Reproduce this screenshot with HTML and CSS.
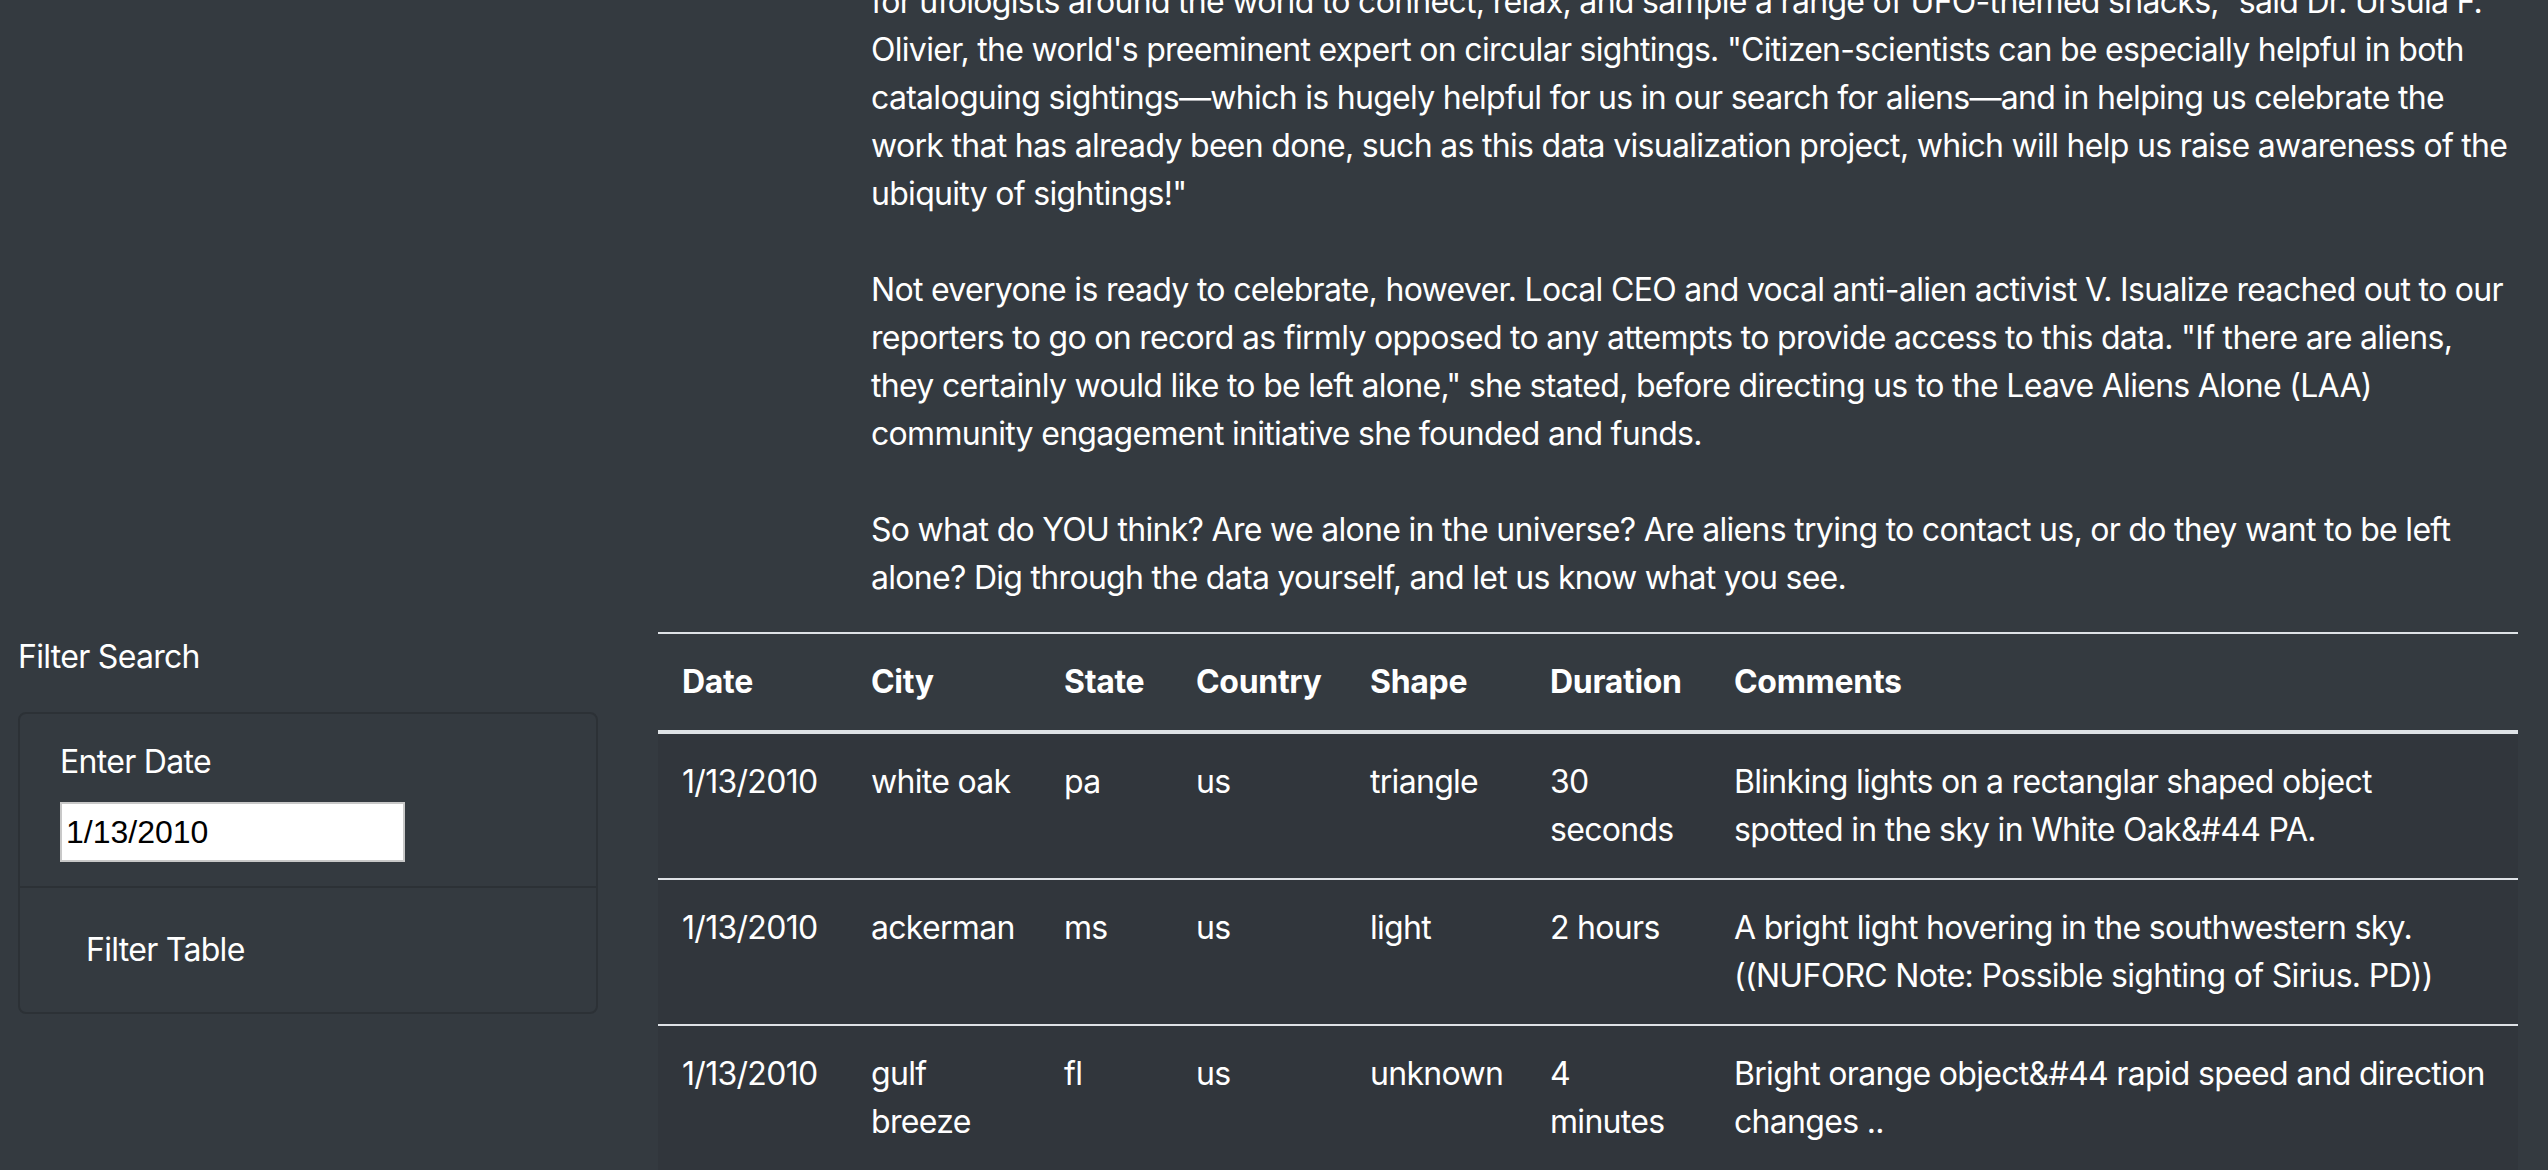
FILE: index.html
```html
<!DOCTYPE html>
<html lang="en">
<head>
<meta charset="utf-8">
<title>UFO Sightings</title>
<link rel="stylesheet" href="styles.css">
</head>
<body>
<div class="page">
  <div class="article">
    <p>for ufologists around the world to connect, relax, and sample a range of UFO-themed snacks," said Dr. Ursula F. Olivier, the world's preeminent expert on circular sightings. "Citizen-scientists can be especially helpful in both cataloguing sightings—which is hugely helpful for us in our search for aliens—and in helping us celebrate the work that has already been done, such as this data visualization project, which will help us raise awareness of the ubiquity of sightings!"</p>
    <p>Not everyone is ready to celebrate, however. Local CEO and vocal anti-alien activist V. Isualize reached out to our reporters to go on record as firmly opposed to any attempts to provide access to this data. "If there are aliens, they certainly would like to be left alone," she stated, before directing us to the Leave Aliens Alone (LAA) community engagement initiative she founded and funds.</p>
    <p class="last">So what do YOU think? Are we alone in the universe? Are aliens trying to contact us, or do they want to be left alone? Dig through the data yourself, and let us know what you see.</p>
  </div>
  <div class="main">
    <aside class="sidebar">
      <div class="sidebar-title">Filter Search</div>
      <form class="card">
        <ul class="list-group">
          <li class="list-group-item">
            <label class="field-label" for="datetime">Enter Date</label>
            <input class="date-input" id="datetime" type="text" value="1/13/2010">
          </li>
          <li class="list-group-item">
            <button class="btn" type="button">Filter Table</button>
          </li>
        </ul>
      </form>
    </aside>
    <section class="content">
      <table class="ufo-table">
        <colgroup>
          <col class="c-date"><col class="c-city"><col class="c-state"><col class="c-country"><col class="c-shape"><col class="c-duration"><col class="c-comments">
        </colgroup>
        <thead>
          <tr><th>Date</th><th>City</th><th>State</th><th>Country</th><th>Shape</th><th>Duration</th><th>Comments</th></tr>
        </thead>
        <tbody>
          <tr><td>1/13/2010</td><td>white oak</td><td>pa</td><td>us</td><td>triangle</td><td>30 seconds</td><td>Blinking lights on a rectanglar shaped object<br>spotted in the sky in White Oak&amp;#44 PA.</td></tr>
          <tr><td>1/13/2010</td><td>ackerman</td><td>ms</td><td>us</td><td>light</td><td>2 hours</td><td>A bright light hovering in the southwestern sky. ((NUFORC Note: Possible sighting of Sirius. PD))</td></tr>
          <tr><td>1/13/2010</td><td>gulf breeze</td><td>fl</td><td>us</td><td>unknown</td><td>4 minutes</td><td>Bright orange object&amp;#44 rapid speed and direction changes ..</td></tr>
          <tr><td>1/13/2010</td><td>lake havasu city</td><td>az</td><td>us</td><td>light</td><td>5 minutes</td><td>Bright light in the sky.</td></tr>
        </tbody>
      </table>
    </section>
  </div>
</div>
</body>
</html>
```

FILE: styles.css
```css
html {
  overflow: hidden;
}

body {
  margin: 0;
  background: #343a40;
  color: #ffffff;
  font-family: Inter, "Noto Sans", sans-serif;
  font-size: 32px;
  line-height: 48px;
  letter-spacing: -0.7px;
}

.page {
  display: flex;
  flex-direction: column;
}

.article {
  margin: -22px 30px 0 871px;
}

.article p {
  margin: 0 0 48px 0;
}

.article p.last {
  margin-bottom: 30px;
}

.main {
  display: flex;
  align-items: flex-start;
}

.sidebar {
  width: 658px;
  flex: 0 0 658px;
  box-sizing: border-box;
  padding-left: 18px;
  padding-top: 1px;
}

.sidebar-title {
  margin-bottom: 31px;
}

.card {
  width: 580px;
  box-sizing: border-box;
  border: 2px solid #2c3136;
  border-radius: 8px;
  margin: 0;
}

.list-group {
  list-style: none;
  margin: 0;
  padding: 0;
}

.list-group-item {
  padding: 24px 40px;
}

.list-group-item + .list-group-item {
  border-top: 2px solid #2c3136;
}

.field-label {
  display: block;
  margin-bottom: 16px;
}

.date-input {
  display: block;
  width: 345px;
  height: 60px;
  box-sizing: border-box;
  margin: 0;
  padding: 0 4px;
  border: 2px solid #c8c8c8;
  background: #ffffff;
  color: #000000;
  font-family: "Liberation Sans", Arial, sans-serif;
  font-size: 32px;
  letter-spacing: 0;
}

.btn {
  display: inline-block;
  margin: 0;
  padding: 12px 24px;
  border: 2px solid transparent;
  background: transparent;
  color: #ffffff;
  font-family: Inter, "Noto Sans", sans-serif;
  font-size: 32px;
  line-height: 48px;
  letter-spacing: -0.7px;
  border-radius: 8px;
}

.content {
  flex: 1 1 auto;
  margin-right: 30px;
}

.ufo-table {
  width: 100%;
  table-layout: fixed;
  border-collapse: collapse;
}

.c-date { width: 189px; }
.c-city { width: 193px; }
.c-state { width: 132px; }
.c-country { width: 174px; }
.c-shape { width: 180px; }
.c-duration { width: 184px; }
.c-comments { width: auto; }

.ufo-table th,
.ufo-table td {
  padding: 24px;
  text-align: left;
  vertical-align: top;
  border-top: 2px solid #dee2e6;
}

.ufo-table thead th {
  vertical-align: bottom;
  font-weight: 700;
  letter-spacing: -0.3px;
  border-bottom: 4px solid #dee2e6;
}

.ufo-table tbody {
  background: #31363c;
}
```
